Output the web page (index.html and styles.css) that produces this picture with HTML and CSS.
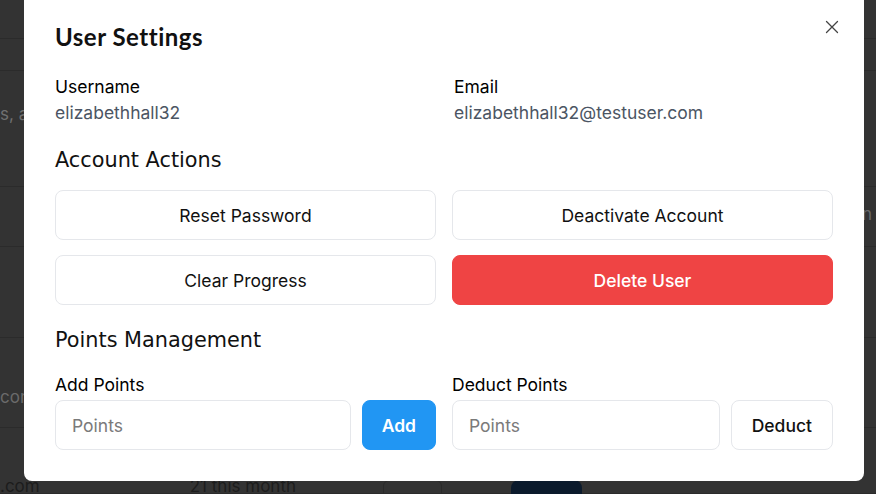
FILE: index.html
```html
<!DOCTYPE html>
<html lang="en">
<head>
<meta charset="utf-8">
<title>User Settings</title>
<link rel="stylesheet" href="styles.css">
</head>
<body>
<div class="page">
  <div class="row r1"></div>
  <div class="row r2"></div>
  <div class="row r3"><span class="bg-text t1">s, a</span></div>
  <div class="row r4"><span class="bg-text t2">n</span></div>
  <div class="row r5"></div>
  <div class="row r6"><span class="bg-text t3">com</span></div>
  <div class="row r7">
    <span class="bg-text t4">.com</span>
    <span class="bg-text t5">21 this month</span>
    <span class="bg-outline"></span>
    <span class="bg-navy"></span>
  </div>
</div>

<div class="overlay">
  <div class="modal">
    <button class="close" aria-label="Close">
      <svg width="14" height="14" viewBox="0 0 14 14"><path d="M1.5 1.5 L12.5 12.5 M12.5 1.5 L1.5 12.5" stroke="#444" stroke-width="1.3" fill="none" stroke-linecap="round"/></svg>
    </button>
    <h2 class="title">User Settings</h2>

    <div class="grid info">
      <div>
        <div class="label">Username</div>
        <div class="value">elizabethhall32</div>
      </div>
      <div>
        <div class="label">Email</div>
        <div class="value">elizabethhall32@testuser.com</div>
      </div>
    </div>

    <h3 class="section">Account Actions</h3>
    <div class="grid actions">
      <button class="btn">Reset Password</button>
      <button class="btn">Deactivate Account</button>
      <button class="btn">Clear Progress</button>
      <button class="btn danger">Delete User</button>
    </div>

    <h3 class="section points-head">Points Management</h3>
    <div class="grid points">
      <div>
        <div class="label">Add Points</div>
        <div class="field-row">
          <input class="input" type="text" placeholder="Points">
          <button class="btn small primary">Add</button>
        </div>
      </div>
      <div>
        <div class="label">Deduct Points</div>
        <div class="field-row">
          <input class="input" type="text" placeholder="Points">
          <button class="btn small medium">Deduct</button>
        </div>
      </div>
    </div>
  </div>
</div>
</body>
</html>
```

FILE: styles.css
```css
* { box-sizing: border-box; }
html, body { margin: 0; padding: 0; }
body {
  width: 876px;
  height: 494px;
  overflow: hidden;
  background: #333333;
  font-family: Inter, "Liberation Sans", sans-serif;
}

/* dimmed page behind the dialog */
.page { display: flex; flex-direction: column; }
.row { border-bottom: 1px solid #2b2b2b; position: relative; display: flex; align-items: center; }
.r1 { height: 39px; }
.r2 { height: 32px; }
.r3 { height: 116px; }
.r4 { height: 60px; }
.r5 { height: 91px; }
.r6 { height: 90px; }
.r7 { height: 66px; align-items: flex-start; padding-top: 46px; }
.bg-text { color: #6a6a6a; font-size: 17px; white-space: nowrap; }
.t1 { margin-left: 0; margin-top: -30px; color: #707070; }
.t2 { margin-left: 862px; margin-top: -5px; }
.t3 { margin-left: 0; margin-top: 29px; }
.t4 { color: #1c1c1c; margin-left: 0; margin-top: 2px; }
.t5 { color: #1c1c1c; margin-left: 150px; margin-top: 2px; }
.bg-outline { width: 59px; height: 24px; border: 1px solid #2a2a2a; border-radius: 6px; margin-left: 87px; margin-top: 6px; }
.bg-navy { width: 71px; height: 24px; background: #0b1a2c; border-radius: 8px; margin-left: 69px; margin-top: 6px; }

.overlay { position: fixed; inset: 0; }
.modal {
  position: absolute;
  left: 24px;
  top: -8px;
  width: 840px;
  background: #ffffff;
  border-radius: 8px;
  padding: 31px;
  color: #111111;
}
.close {
  position: absolute;
  right: 22px;
  top: 25px;
  width: 20px;
  height: 20px;
  padding: 0;
  border: 0;
  background: transparent;
  display: flex;
  align-items: center;
  justify-content: center;
}

.title {
  margin: 0;
  font-family: Lato, sans-serif;
  font-weight: 700;
  font-size: 24px;
  line-height: 28px;
  letter-spacing: 0.5px;
  color: #111;
}
.grid { display: grid; grid-template-columns: minmax(0, 1fr) minmax(0, 1fr); column-gap: 16px; }
.info { margin-top: 24px; column-gap: 20px; }
.label { font-size: 17.5px; line-height: 24px; font-weight: 400; color: #000; }
.value { font-size: 17.5px; line-height: 24px; margin-top: 2px; color: #4b5563; }

.section {
  margin: 21px 0 0 0;
  font-family: "DejaVu Sans", sans-serif;
  font-weight: 400;
  font-size: 20.8px;
  line-height: 28px;
  color: #111;
}
.actions { margin-top: 16px; row-gap: 15px; }
.btn {
  height: 50px;
  border: 1px solid #e5e7eb;
  border-radius: 8px;
  background: #ffffff;
  font-family: Inter, sans-serif;
  font-size: 17.5px;
  font-weight: 400;
  color: #111;
}
.danger { background: #ef4444; border-color: #ef4444; color: #ffffff; font-weight: 500; }
.points-head { margin-top: 21px; }
.points { margin-top: 19px; }
.field-row { display: flex; gap: 11px; margin-top: 3px; }
.input {
  flex: 1;
  min-width: 0;
  height: 50px;
  border: 1px solid #e5e7eb;
  border-radius: 8px;
  padding: 0 16px;
  font-family: Inter, sans-serif;
  font-size: 17.5px;
  color: #111;
}
.input::placeholder { color: #7a7a7a; }
.small { padding: 0 19px; }
.medium { font-weight: 500; padding: 0 20px; }
.primary { background: #2196f3; border-color: #2196f3; color: #fff; font-weight: 600; }
```
